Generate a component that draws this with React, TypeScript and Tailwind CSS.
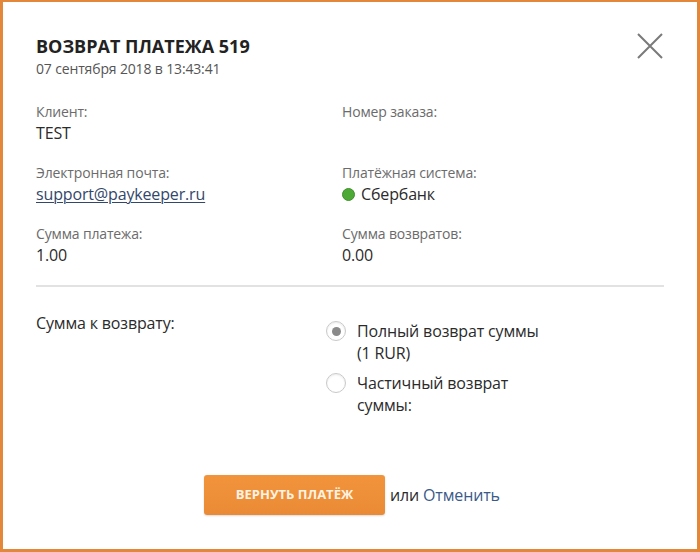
import React from "react";

function Field({ label, children }: { label: string; children: React.ReactNode }) {
  return (
    <div className="flex flex-col">
      <div className="text-[14px] leading-[20px] text-[#6b6b6b]">{label}</div>
      <div className="text-[16px] leading-[22px] text-[#2b2b2b]">{children}</div>
    </div>
  );
}

function Radio({ checked }: { checked?: boolean }) {
  return (
    <span className="mt-[1px] flex h-[20px] w-[20px] shrink-0 items-center justify-center rounded-full border border-[#c9c9c9] bg-white shadow-[inset_0_1px_2px_rgba(0,0,0,0.08)]">
      {checked && <span className="h-[9px] w-[9px] rounded-full bg-[#8a8a8a]" />}
    </span>
  );
}

export default function App() {
  return (
    <div
      className="relative h-[552px] w-[700px] border-[3px] border-t-2 border-[#e3873a] bg-white tracking-[-0.15px]"
      style={{ fontFamily: "'Open Sans', 'Liberation Sans', sans-serif" }}
    >
      <button className="absolute right-[33px] top-[30px] h-[28px] w-[28px] text-[#7a7a7a]">
        <svg viewBox="0 0 28 28" width="28" height="28" fill="none" stroke="currentColor" strokeWidth="2">
          <path d="M2 2 L26 26 M26 2 L2 26" />
        </svg>
      </button>

      <div className="px-[33px] pt-[31px]">
        <h1 className="text-[18px] font-bold leading-[26px] tracking-normal text-[#222]">ВОЗВРАТ ПЛАТЕЖА 519</h1>
        <div className="text-[14px] leading-[20px] text-[#555]">07 сентября 2018 в 13:43:41</div>

        <div className="mt-[23px] grid grid-cols-[306px_1fr] gap-y-[19px]">
          <Field label="Клиент:">TEST</Field>
          <Field label="Номер заказа:">{""}</Field>
          <Field label="Электронная почта:">
            <span className="text-[#33476b] underline decoration-[1px] underline-offset-2">support@paykeeper.ru</span>
          </Field>
          <Field label="Платёжная система:">
            <span className="flex items-center gap-[6px]">
              <span className="h-[13px] w-[13px] rounded-full border border-[#3f8f2c] bg-[#4caa35]" />
              Сбербанк
            </span>
          </Field>
          <Field label="Сумма платежа:">1.00</Field>
          <Field label="Сумма возвратов:">0.00</Field>
        </div>

        <div className="mt-[19px] h-[2px] w-[628px] bg-[#e2e2e2]" />

        <div className="mt-[25px] flex">
          <div className="w-[290px] text-[16px] leading-[22px] text-[#2b2b2b]">Сумма к возврату:</div>
          <div className="mt-[8px] flex flex-col gap-[8px] text-[16px] leading-[22px] text-[#2b2b2b]">
            <label className="flex gap-[11px]">
              <Radio checked />
              <span>
                Полный возврат суммы
                <br />
                (1 RUR)
              </span>
            </label>
            <label className="flex gap-[11px]">
              <Radio />
              <span>
                Частичный возврат
                <br />
                суммы:
              </span>
            </label>
          </div>
        </div>

        <div className="mt-[59px] flex items-center pl-[168px]">
          <button className="h-[40px] w-[181px] rounded-[3px] bg-gradient-to-b from-[#f2943c] to-[#ea8a36] text-[13px] font-bold uppercase tracking-normal text-[#fff3e2] shadow-[0_1px_2px_rgba(0,0,0,0.15)]">
            ВЕРНУТЬ ПЛАТЁЖ
          </button>
          <span className="ml-[5px] text-[16px] text-[#2b2b2b]">
            или <span className="text-[#3a5a8a]">Отменить</span>
          </span>
        </div>
      </div>
    </div>
  );
}
